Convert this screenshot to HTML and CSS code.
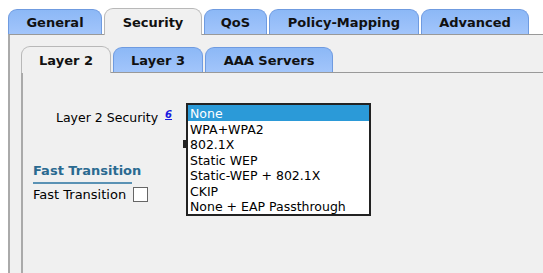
FILE: index.html
```html
<!DOCTYPE html>
<html lang="en">
<head>
    <meta charset="UTF-8">
    <title>WLAN Security</title>
    <link rel="stylesheet" href="styles.css">
</head>
<body>
    <div class="tabs main-tabs">
        <div class="tab tab-general">General</div>
        <div class="tab tab-security active">Security</div>
        <div class="tab tab-qos">QoS</div>
        <div class="tab tab-policy">Policy-Mapping</div>
        <div class="tab tab-advanced">Advanced</div>
    </div>
    <div class="panel">
        <div class="tabs sub-tabs">
            <div class="tab tab-l2 active">Layer 2</div>
            <div class="tab tab-l3">Layer 3</div>
            <div class="tab tab-aaa">AAA Servers</div>
        </div>
        <div class="sub-panel">
            <div class="security-row">
                <span class="field-label">Layer 2 Security <a href="#" class="note">6</a></span>
                <div class="select-wrap">
                    <span class="select-edge"></span>
                    <ul class="listbox">
                        <li class="selected">None</li>
                        <li>WPA+WPA2</li>
                        <li>802.1X</li>
                        <li>Static WEP</li>
                        <li>Static-WEP + 802.1X</li>
                        <li>CKIP</li>
                        <li>None + EAP Passthrough</li>
                    </ul>
                </div>
            </div>
            <div class="fast-transition">
                <h3>Fast Transition</h3>
                <label class="check-row">Fast Transition <span class="checkbox"></span></label>
            </div>
        </div>
    </div>
</body>
</html>
```

FILE: styles.css
```css
body {
    margin: 0;
    padding: 0;
    background: #fff;
    font-family: "DejaVu Sans", Verdana, sans-serif;
    font-size: 12px;
    color: #000;
    height: 273px;
    overflow: hidden;
    display: flex;
    flex-direction: column;
}

.tabs {
    display: flex;
    gap: 2px;
    position: relative;
    z-index: 1;
}

.main-tabs {
    margin-top: 9px;
    padding-left: 8px;
}

.tab {
    height: 25px;
    line-height: 26px;
    text-align: center;
    font-weight: bold;
    font-size: 13px;
    color: #111;
    border: 1px solid #6f9be0;
    border-bottom: none;
    border-radius: 9px 9px 0 0;
    background: linear-gradient(#8cb8f6, #a2c5fb);
    box-sizing: border-box;
    margin-bottom: -1px;
}

.tab.active {
    background: #f0f0f0;
    border-color: #b8b8b8;
    height: 27px;
    margin-top: -1px;
    line-height: 28px;
}

.tab-general { width: 94px; }
.tab-security { width: 98px; }
.tab-qos { width: 63px; }
.tab-policy { width: 150px; }
.tab-advanced { width: 108px; }

.panel {
    flex-grow: 1;
    margin-left: 8px;
    background: #f0f0f0;
    border-top: 1px solid #999;
    border-left: 2px solid #aaa;
    padding-top: 12px;
    display: flex;
    flex-direction: column;
}

.sub-tabs {
    padding-left: 11px;
}

.tab-l2 { width: 90px; }
.tab-l3 { width: 90px; }
.tab-aaa { width: 128px; }

.sub-panel {
    flex-grow: 1;
    margin-left: 11px;
    border-top: 1px solid #999;
    border-left: 2px solid #aaa;
    padding-top: 30px;
}

.security-row {
    display: flex;
    align-items: flex-start;
}

.field-label {
    margin-left: 33px;
    margin-top: 6px;
    width: 130px;
    font-size: 12.5px;
}

.note {
    color: #1a1ae0;
    font-size: 10px;
    font-weight: bold;
    font-style: italic;
    vertical-align: 4px;
    margin-left: 3px;
}

.select-wrap {
    position: relative;
}

.select-edge {
    position: absolute;
    left: -3px;
    top: 37px;
    width: 3px;
    height: 8px;
    background: #222;
}

.listbox {
    list-style: none;
    margin: 0;
    padding: 0;
    width: 181px;
    border: 2px solid #222;
    background: #fff;
    position: relative;
    font-size: 12.5px;
}

.listbox li {
    height: 15.5px;
    line-height: 17px;
    padding-left: 2px;
    white-space: nowrap;
}

.listbox li.selected {
    background: #2b9ad8;
    color: #fff;
}

.fast-transition {
    margin-left: 10px;
    margin-top: -53px;
    width: 140px;
}

.fast-transition h3 {
    margin: 0;
    font-size: 13px;
    color: #2a6a90;
    width: 99px;
    white-space: nowrap;
    border-bottom: 2px solid #5a92b4;
    padding-bottom: 4px;
}

.check-row {
    display: flex;
    align-items: center;
    gap: 7px;
    margin-top: 3px;
    font-size: 13px;
    white-space: nowrap;
}

.checkbox {
    display: inline-block;
    width: 13px;
    height: 13px;
    border: 1px solid #666;
    background: #fff;
}
```
